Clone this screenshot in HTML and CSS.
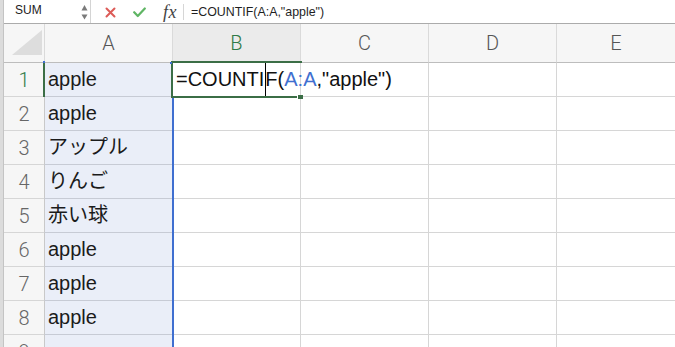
FILE: index.html
```html
<!DOCTYPE html>
<html lang="ja">
<head>
<meta charset="utf-8">
<title>COUNTIF</title>
<link rel="stylesheet" href="styles.css">
</head>
<body>
<div class="app">
  <div class="edge"></div>
  <div class="main">
    <div class="fbar">
      <div class="namebox">
        <span class="name">SUM</span>
        <svg class="spin" width="7" height="17" viewBox="0 0 7 17"><path d="M0.5 7.5L3.5 2L6.5 7.5Z" fill="#7a7a7a"/><path d="M0.5 11.5L3.5 16.5L6.5 11.5Z" fill="#7a7a7a"/></svg>
      </div>
      <div class="tools">
        <svg width="11" height="11" viewBox="0 0 11 11"><path d="M1.5 1.5L9.5 9.5M9.5 1.5L1.5 9.5" stroke="#dc5b57" stroke-width="2" stroke-linecap="round" fill="none"/></svg>
        <svg width="13" height="11" viewBox="0 0 13 11"><path d="M1.2 5.2L4.8 9L11.8 1.5" stroke="#5fb564" stroke-width="2.2" stroke-linecap="round" stroke-linejoin="round" fill="none"/></svg>
        <span class="fx">fx</span>
      </div>
      <div class="sep"></div>
      <div class="ftext">=COUNTIF(A:A,"apple")</div>
    </div>
    <div class="sheet">
      <div class="hd corner"><svg width="40" height="38" viewBox="0 0 40 38"><path d="M8 31L38 6L38 31Z" fill="#dddddd"/></svg></div>
      <div class="hd col">A</div>
      <div class="hd col sel">B</div>
      <div class="hd col">C</div>
      <div class="hd col">D</div>
      <div class="hd col">E</div>

      <div class="rh r1 act">1</div><div class="c a r1">apple</div><div class="c r1 edit">=COUNTI<span class="caret"></span>F(<span class="ref">A:A</span>,"apple")</div><div class="c r1"></div><div class="c r1"></div><div class="c r1"></div>
      <div class="rh">2</div><div class="c a">apple</div><div class="c"></div><div class="c"></div><div class="c"></div><div class="c"></div>
      <div class="rh">3</div><div class="c a">アップル</div><div class="c"></div><div class="c"></div><div class="c"></div><div class="c"></div>
      <div class="rh">4</div><div class="c a">りんご</div><div class="c"></div><div class="c"></div><div class="c"></div><div class="c"></div>
      <div class="rh">5</div><div class="c a">赤い球</div><div class="c"></div><div class="c"></div><div class="c"></div><div class="c"></div>
      <div class="rh">6</div><div class="c a">apple</div><div class="c"></div><div class="c"></div><div class="c"></div><div class="c"></div>
      <div class="rh">7</div><div class="c a">apple</div><div class="c"></div><div class="c"></div><div class="c"></div><div class="c"></div>
      <div class="rh">8</div><div class="c a">apple</div><div class="c"></div><div class="c"></div><div class="c"></div><div class="c"></div>
      <div class="rh">9</div><div class="c a"></div><div class="c"></div><div class="c"></div><div class="c"></div><div class="c"></div>

      <div class="rowmark"></div>
      <div class="range-line"></div>
      <div class="range-dot d1"></div>
      <div class="range-dot d2"></div>
      <div class="cellbox"></div>
      <div class="handle"></div>
    </div>
  </div>
</div>
</body>
</html>
```

FILE: styles.css
```css
html, body {
  margin: 0;
  padding: 0;
}
body {
  width: 675px;
  height: 347px;
  overflow: hidden;
  background: #ffffff;
  font-family: "Liberation Sans", "Noto Sans CJK JP", sans-serif;
  color: #1b1b1b;
}
.app {
  display: flex;
  height: 347px;
}
.edge {
  flex: none;
  width: 3px;
  background: #dcdcdc;
  border-right: 1px solid #c4c4c4;
}
.main {
  flex: 1;
  min-width: 0;
  display: flex;
  flex-direction: column;
}
.fbar {
  flex: none;
  height: 23px;
  border-bottom: 1px solid #ababab;
  display: flex;
  align-items: center;
  background: #ffffff;
}
.namebox {
  box-sizing: border-box;
  width: 87px;
  height: 23px;
  border-right: 1px solid #d4d4d4;
  display: flex;
  align-items: center;
  justify-content: space-between;
  padding: 0 2px 3px 11px;
}
.name {
  font-size: 12px;
  color: #222;
}
.spin {
  display: block;
  margin-top: 2px;
}
.tools {
  display: flex;
  align-items: center;
  gap: 17px;
  padding-left: 14px;
  padding-top: 1px;
}
.tools svg {
  display: block;
}
.fx {
  font-family: "Liberation Serif", serif;
  font-style: italic;
  font-size: 18px;
  color: #444;
  letter-spacing: 0.5px;
  line-height: 20px;
}
.sep {
  width: 1px;
  height: 16px;
  background: #d6d6d6;
  margin-left: 6px;
}
.ftext {
  padding-left: 7px;
  font-size: 12.4px;
  color: #1f1f1f;
  white-space: nowrap;
}
.sheet {
  position: relative;
  flex: 1;
  display: grid;
  grid-template-columns: 40px repeat(4, 128px) 1fr;
  grid-template-rows: 38px repeat(9, 34px);
  overflow: hidden;
}
.hd {
  box-sizing: border-box;
  background: #f6f6f6;
  border-left: 1px solid #dadada;
  display: flex;
  align-items: center;
  justify-content: center;
  font-family: Roboto, "Liberation Sans", sans-serif;
  font-weight: 300;
  font-size: 20px;
  color: #555;
}
.corner {
  border-left: none;
  display: block;
}
.corner svg {
  display: block;
}
.hd.sel {
  background: #ebebeb;
  color: #2f7a47;
}
.rh {
  box-sizing: border-box;
  background: #f6f6f6;
  border-top: 1px solid #d6d6d6;
  display: flex;
  align-items: center;
  justify-content: center;
  font-family: Roboto, "Liberation Sans", sans-serif;
  font-weight: 300;
  font-size: 20px;
  color: #666;
  padding-top: 1px;
}
.rh.act {
  color: #2f7a47;
}
.c {
  box-sizing: border-box;
  border-top: 1px solid #d6d6d6;
  border-left: 1px solid #d6d6d6;
  font-size: 20px;
  line-height: 33px;
  padding-left: 3px;
  white-space: nowrap;
  overflow: visible;
  min-width: 0;
}
.c.a {
  background: #eaeef8;
  border-top-color: #c7cbd5;
  border-left-color: #c9c9c9;
}
.r1 {
  border-top-color: #bdbdbd;
}
.c.a.r1 {
  border-top-color: #bdbdbd;
}
.rh.r1 {
  border-top-color: #bdbdbd;
}
.edit {
  position: relative;
  z-index: 3;
  color: #111;
}
.caret {
  display: inline-block;
  width: 0;
  height: 33px;
  border-left: 1px solid #000;
  vertical-align: top;
  margin-left: 1px;
  margin-right: -1px;
}
.ref {
  color: #3f6fd0;
}
.rowmark {
  position: absolute;
  left: 39px;
  top: 38px;
  width: 2px;
  height: 35px;
  background: #3b6e46;
  z-index: 4;
}
.range-line {
  position: absolute;
  left: 168px;
  top: 73px;
  width: 2px;
  bottom: 0;
  background: #3f6fd0;
  z-index: 4;
}
.range-dot {
  position: absolute;
  width: 2px;
  height: 2px;
  background: #3f6fd0;
  z-index: 5;
}
.d1 {
  left: 39px;
  top: 37px;
}
.d2 {
  left: 166px;
  top: 38px;
}
.cellbox {
  position: absolute;
  left: 167px;
  top: 37px;
  width: 131px;
  height: 37px;
  box-sizing: border-box;
  border-top: 2px solid #3b6e46;
  border-left: 2px solid #3b6e46;
  border-bottom: 2px solid #3b6e46;
  z-index: 4;
  pointer-events: none;
}
.handle {
  position: absolute;
  left: 294px;
  top: 71px;
  width: 5px;
  height: 4px;
  background: #3b6e46;
  box-shadow: -1px 0 0 #ffffff;
  z-index: 5;
}
```
